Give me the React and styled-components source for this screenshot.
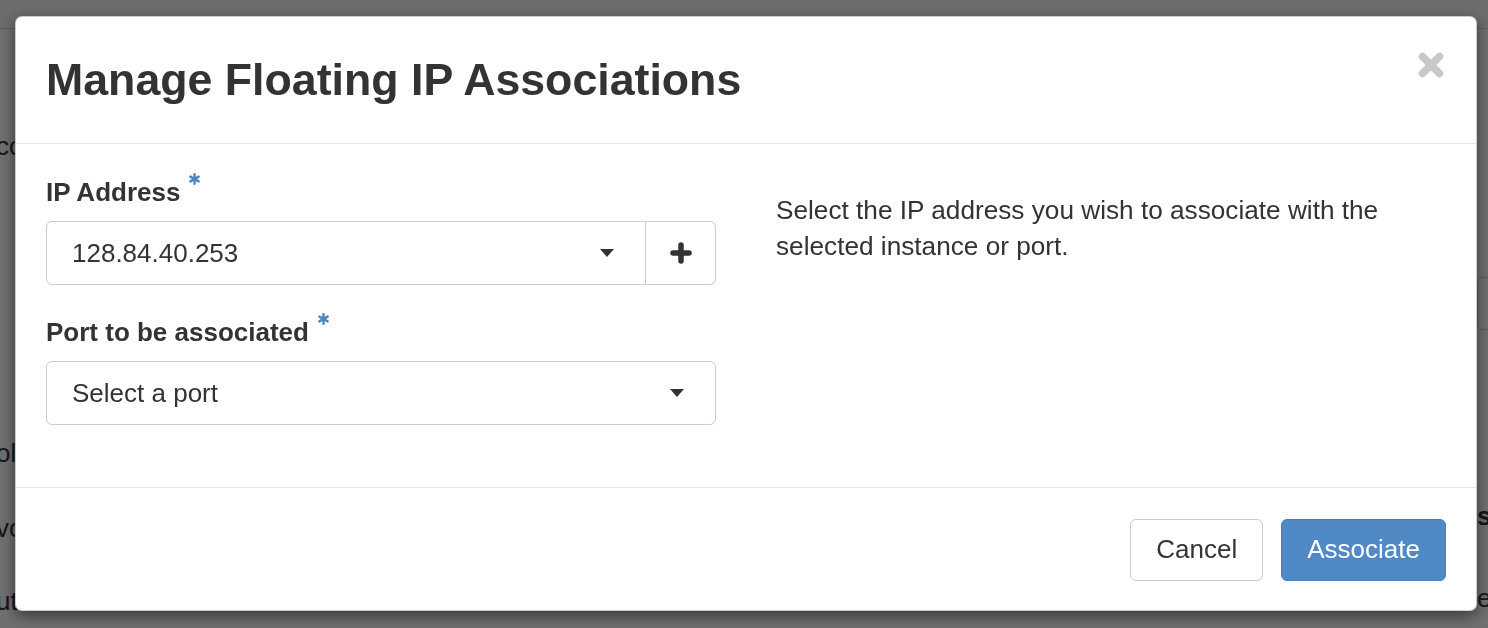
import styled, { createGlobalStyle } from "styled-components";

const GlobalStyle = createGlobalStyle`
  * { box-sizing: border-box; }
  html, body {
    margin: 0;
    padding: 0;
    height: 100%;
    overflow: hidden;
  }
  body {
    font-family: "Liberation Sans", Arial, Helvetica, sans-serif;
    color: #333;
    background: #fff;
  }
`;

/* page behind the dialog */
const BgPage = styled.div`
  width: 1488px;
  height: 628px;
  overflow: hidden;
`;

const BgTopBar = styled.div`
  height: 29px;
  border-bottom: 1px solid #d8d8d8;
  background: #f8f8f8;
`;

const BgBody = styled.div`
  display: flex;
  justify-content: space-between;
`;

const BgColumn = styled.div`
  display: flex;
  flex-direction: column;
  width: ${(p) => p.$width}px;
  margin-left: ${(p) => p.$shift || 0}px;
`;

const BgText = styled.div`
  font-size: 26px;
  line-height: 30px;
  white-space: nowrap;
  margin-top: ${(p) => p.$gap}px;
  font-weight: ${(p) => (p.$bold ? 700 : 400)};
`;

const BgInput = styled.div`
  width: 60px;
  height: 53px;
  margin-top: ${(p) => p.$gap}px;
  border: 1px solid #ccc;
  border-radius: 6px;
`;

/* dialog */
const Backdrop = styled.div`
  position: fixed;
  inset: 0;
  background: rgba(0, 0, 0, 0.565);
`;

const ModalLayer = styled.div`
  position: fixed;
  inset: 0;
  padding: 16px 0 0 15px;
`;

const Modal = styled.div`
  width: 1462px;
  background: #fff;
  border: 1px solid rgba(0, 0, 0, 0.2);
  border-radius: 7px;
  box-shadow: 0 5px 15px rgba(0, 0, 0, 0.5);
`;

const Header = styled.div`
  display: flex;
  justify-content: space-between;
  padding: 38px 32px 39px 30px;
  border-bottom: 1px solid #e5e5e5;
`;

const Title = styled.h3`
  margin: 0;
  font-size: 44.7px;
  line-height: 49px;
  font-weight: 700;
  color: #333;
`;

const CloseButton = styled.button`
  align-self: flex-start;
  margin-top: -3px;
  padding: 0;
  border: 0;
  background: none;
  width: 26px;
  height: 26px;
  color: #c8c8c8;
  cursor: pointer;
  svg { display: block; }
`;

const Body = styled.div`
  display: grid;
  grid-template-columns: 1fr 1fr;
  column-gap: 60px;
  padding: 30px 30px 62px;
`;

const FormColumn = styled.div`
  display: flex;
  flex-direction: column;
  gap: 29px;
`;

const Field = styled.div`
  display: flex;
  flex-direction: column;
  gap: 10px;
`;

const Label = styled.label`
  font-size: 26px;
  line-height: 37px;
  font-weight: 700;
  color: #333;
  white-space: nowrap;
`;

const Required = styled.span`
  display: inline-block;
  position: relative;
  top: -2px;
  margin-left: 9px;
  vertical-align: 14px;
  svg { display: block; }
`;

const InputGroup = styled.div`
  display: flex;
`;

const Select = styled.div`
  flex-grow: 1;
  height: 64px;
  display: flex;
  align-items: center;
  justify-content: space-between;
  padding: 0 31px 0 25px;
  border: 1px solid #ccc;
  border-radius: ${(p) => (p.$grouped ? "6px 0 0 6px" : "6px")};
  font-size: 26px;
  color: #333;
  background: #fff;
`;

const Caret = styled.span`
  width: 0;
  height: 0;
  border-top: 8px solid #333;
  border-left: 7px solid transparent;
  border-right: 7px solid transparent;
`;

const AddonButton = styled.button`
  width: 70px;
  height: 64px;
  display: flex;
  align-items: center;
  justify-content: center;
  padding: 0;
  border: 1px solid #ccc;
  border-left: 0;
  border-radius: 0 6px 6px 0;
  background: #fff;
  color: #333;
  svg { display: block; }
`;

const HelpText = styled.p`
  margin: 18px 0 0;
  font-size: 26.2px;
  line-height: 36px;
  color: #333;
`;

const Footer = styled.div`
  height: 123px;
  display: flex;
  align-items: center;
  justify-content: flex-end;
  gap: 18px;
  padding: 1px 30px 0;
  border-top: 1px solid #e5e5e5;
`;

const Button = styled.button`
  height: 62px;
  padding: 0 25px;
  font-family: inherit;
  font-size: 26px;
  border-radius: 6px;
  border: 1px solid ${(p) => (p.$primary ? "#4680c0" : "#ccc")};
  background: ${(p) => (p.$primary ? "#5089c6" : "#fff")};
  color: ${(p) => (p.$primary ? "#fff" : "#333")};
  cursor: pointer;
`;

const Asterisk = () => (
  <svg width="11" height="12" viewBox="0 0 11 12">
    <g stroke="#4b87c6" strokeWidth="2.4" strokeLinecap="round">
      <line x1="5.5" y1="1.3" x2="5.5" y2="10.7" />
      <line x1="1.4" y1="3.6" x2="9.6" y2="8.4" />
      <line x1="1.4" y1="8.4" x2="9.6" y2="3.6" />
    </g>
  </svg>
);

const App = () => {
  return (
    <>
      <GlobalStyle />
      <BgPage>
        <BgTopBar />
        <BgBody>
          <BgColumn $width={60} $shift={-4}>
            <BgText $gap={102}>cc</BgText>
            <BgText $gap={277}>olo</BgText>
            <BgText $gap={45}>vol</BgText>
            <BgText $gap={43}>ut</BgText>
          </BgColumn>
          <BgColumn $width={11}>
            <BgInput $gap={248} />
            <BgText $gap={171} $bold>
              st
            </BgText>
            <BgText $gap={52}>ex</BgText>
          </BgColumn>
        </BgBody>
      </BgPage>

      <Backdrop />
      <ModalLayer>
        <Modal>
          <Header>
            <Title>Manage Floating IP Associations</Title>
            <CloseButton aria-label="Close">
              <svg width="26" height="26" viewBox="0 0 26 26">
                <g stroke="currentColor" strokeWidth="7.5" strokeLinecap="round">
                  <line x1="4.5" y1="4.5" x2="21.5" y2="21.5" />
                  <line x1="21.5" y1="4.5" x2="4.5" y2="21.5" />
                </g>
              </svg>
            </CloseButton>
          </Header>

          <Body>
            <FormColumn>
              <Field>
                <Label>
                  IP Address
                  <Required>
                    <Asterisk />
                  </Required>
                </Label>
                <InputGroup>
                  <Select $grouped>
                    128.84.40.253
                    <Caret />
                  </Select>
                  <AddonButton aria-label="Allocate IP">
                    <svg width="22" height="22" viewBox="0 0 22 22">
                      <g stroke="currentColor" strokeWidth="5.5" strokeLinecap="round">
                        <line x1="11" y1="3" x2="11" y2="19" />
                        <line x1="3" y1="11" x2="19" y2="11" />
                      </g>
                    </svg>
                  </AddonButton>
                </InputGroup>
              </Field>
              <Field>
                <Label>
                  Port to be associated
                  <Required>
                    <Asterisk />
                  </Required>
                </Label>
                <Select>
                  Select a port
                  <Caret />
                </Select>
              </Field>
            </FormColumn>
            <div>
              <HelpText>
                Select the IP address you wish to associate with the selected instance or port.
              </HelpText>
            </div>
          </Body>

          <Footer>
            <Button>Cancel</Button>
            <Button $primary>Associate</Button>
          </Footer>
        </Modal>
      </ModalLayer>
    </>
  );
};

export default App;
